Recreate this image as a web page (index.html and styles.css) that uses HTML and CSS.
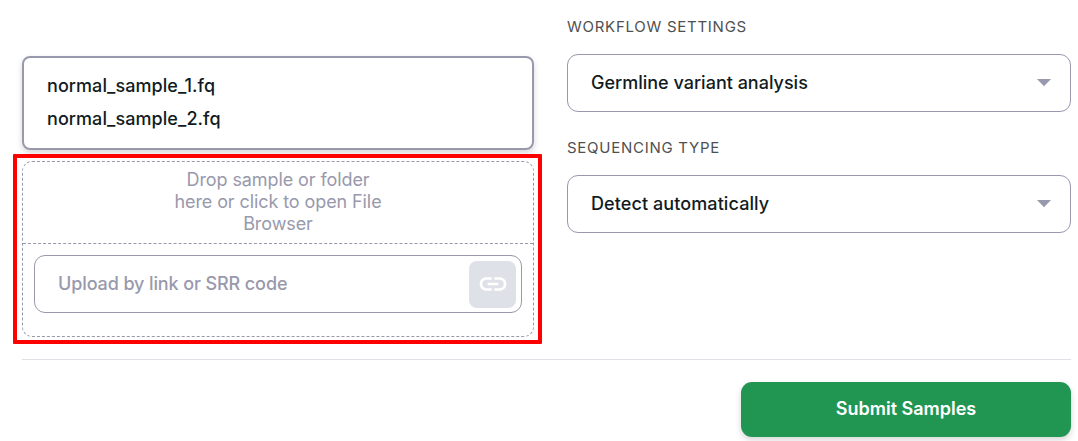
FILE: index.html
```html
<!DOCTYPE html>
<html lang="en">
<head>
<meta charset="utf-8">
<title>Submit Samples</title>
<link rel="stylesheet" href="styles.css">
</head>
<body>
<main class="page">
  <div class="columns">
    <section class="samples">
      <ul class="file-list">
        <li class="file">normal_sample_1.fq</li>
        <li class="file">normal_sample_2.fq</li>
      </ul>
      <div class="upload">
        <div class="drop-area"><p class="drop-text">Drop sample or folder here or click to open File Browser</p></div>
        <div class="link-area">
          <div class="link-field">
            <span class="placeholder">Upload by link or SRR code</span>
            <button class="link-button" aria-label="Add link">
              <svg class="link-icon" viewBox="0 0 24 24"><path d="M3.9 12c0-1.71 1.39-3.1 3.1-3.1h4V7H7c-2.76 0-5 2.24-5 5s2.24 5 5 5h4v-1.9H7c-1.71 0-3.1-1.39-3.1-3.1zM8 13h8v-2H8v2zm9-6h-4v1.9h4c1.71 0 3.1 1.39 3.1 3.1s-1.39 3.1-3.1 3.1h-4V17h4c2.76 0 5-2.24 5-5s-2.24-5-5-5z"/></svg>
            </button>
          </div>
        </div>
        <div class="highlight"></div>
      </div>
    </section>
    <section class="settings">
      <div class="label">WORKFLOW SETTINGS</div>
      <div class="select"><span>Germline variant analysis</span><svg class="caret" viewBox="0 0 14 8"><path d="M0 0h14L7 7.3z"/></svg></div>
      <div class="label">SEQUENCING TYPE</div>
      <div class="select sequencing"><span>Detect automatically</span><svg class="caret" viewBox="0 0 14 8"><path d="M0 0h14L7 7.3z"/></svg></div>
    </section>
  </div>
  <footer class="footer"><button class="submit">Submit Samples</button></footer>
</main>
</body>
</html>
```

FILE: styles.css
```css
* { box-sizing: border-box; }
body { margin: 0; background: #fff; font-family: Inter, sans-serif; color: #111b22; overflow: hidden; }
.page { height: 441px; padding: 0 7px 0 22px; }
.columns { display: grid; grid-template-columns: 512px 504px; column-gap: 33px; height: 359px; }
.samples { padding-top: 56px; }
.file-list {
  height: 94px; margin: 0; padding: 12px 23px; list-style: none;
  border: 2px solid #9899ac; border-radius: 8px;
  box-shadow: 0 3px 6px rgba(0, 0, 0, .16);
}
.file { height: 33px; line-height: 32px; font-size: 18px; font-weight: 500; letter-spacing: .06px; }
.upload { position: relative; height: 176px; margin-top: 11px; border: 1px dashed #9899ac; border-radius: 10px; }
.drop-area { height: 82px; padding-top: 7px; border-bottom: 1px dashed #9899ac; }
.drop-text { width: 220px; margin: 0 auto; font-size: 18px; line-height: 22px; letter-spacing: -.09px; text-align: center; color: #9899ac; }
.link-area { padding: 11px; }
.link-field {
  display: flex; align-items: center; justify-content: space-between;
  height: 58px; padding: 0 5px 0 23px; border: 1px solid #9899ac; border-radius: 11px;
}
.placeholder { padding-bottom: 1px; font-size: 18px; font-weight: 500; letter-spacing: -.11px; color: #9899ac; }
.link-button { display: grid; place-items: center; width: 47px; height: 47px; padding: 0 0 0 1px; border: 0; border-radius: 8px; background: #dfe1e8; }
.link-icon { width: 32px; height: 32px; fill: #fff; }
.highlight { position: absolute; inset: -8px -9px -8px -10px; border: 4px solid #f00; border-radius: 1px; pointer-events: none; }
.settings { padding-top: 17px; }
.label { height: 20px; line-height: 20px; font-size: 15px; letter-spacing: .73px; color: #505050; }
.select {
  display: flex; align-items: center; justify-content: space-between;
  height: 58px; margin: 17px 0 26px; padding: 0 19px 0 23px;
  border: 1px solid #9899ac; border-radius: 11px; font-size: 18px; font-weight: 500;
}
.select span { padding-bottom: 2px; }
.sequencing { letter-spacing: .09px; }
.caret { width: 14px; height: 8px; fill: #9899ac; }
.footer { display: flex; justify-content: flex-end; padding-top: 22px; border-top: 1px solid #dfe1e6; }
.submit {
  width: 330px; height: 55px; padding: 0 0 2px; border: 0; border-radius: 11px;
  background: #219653; color: #fff; font: 600 18px Inter, sans-serif;
  box-shadow: 0 3px 6px rgba(0, 0, 0, .16);
}
```
